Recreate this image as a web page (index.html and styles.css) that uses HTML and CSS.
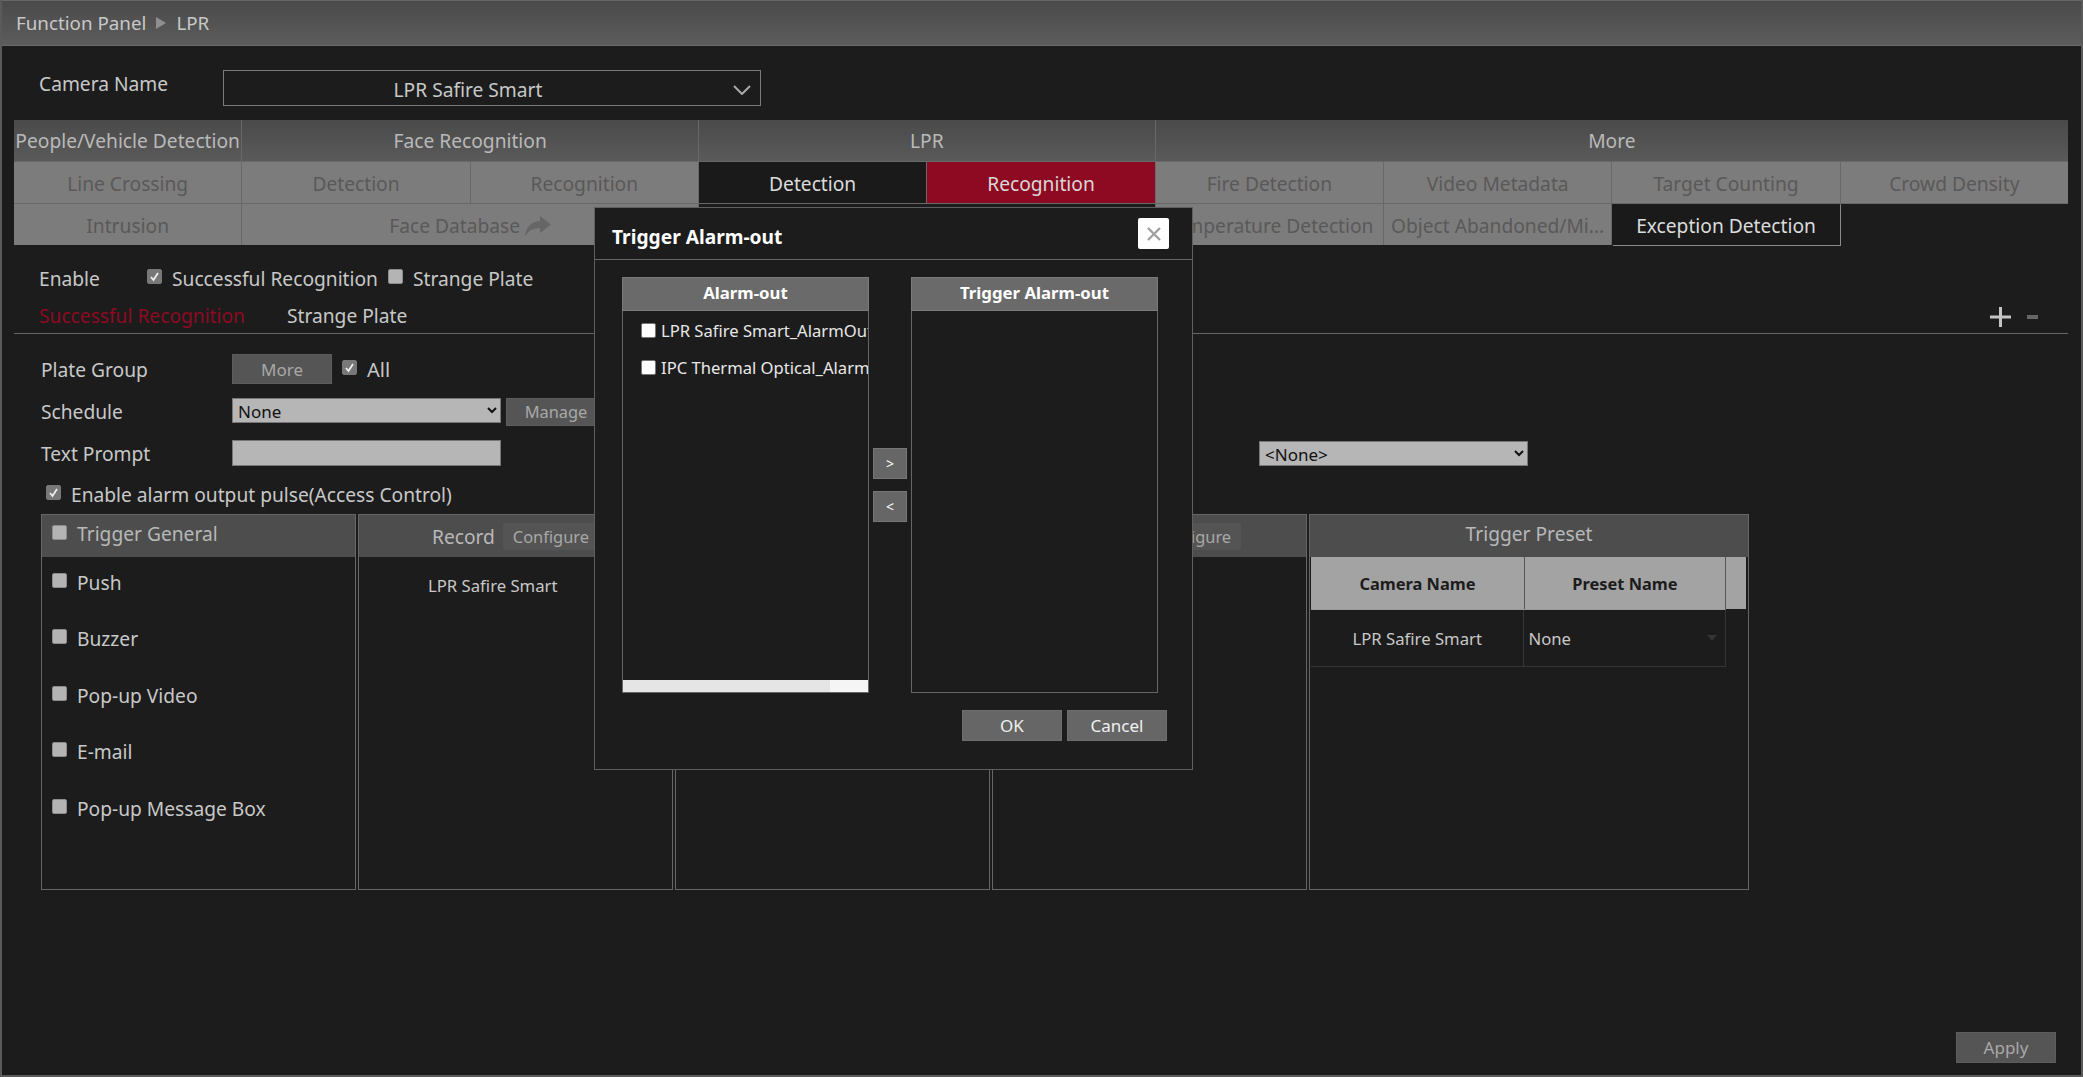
FILE: index.html
```html
<!DOCTYPE html>
<html lang="en">
<head>
    <meta charset="UTF-8">
    <title>LPR</title>
    <link rel="stylesheet" href="styles.css">
</head>
<body>
    <div class="page">
        <div class="crumb">
            <span>Function Panel</span>
            <svg class="crumb-arrow" width="10" height="12" viewBox="0 0 10 12"><path d="M0 0L10 6L0 12Z" fill="#8f8f8f"/></svg>
            <span>LPR</span>
        </div>

        <div class="camera-row">
            <span class="camera-label">Camera Name</span>
            <div class="camera-select">
                <span>LPR Safire Smart</span>
                <svg width="18" height="10" viewBox="0 0 18 10"><path d="M1 1L9 9L17 1" fill="none" stroke="#aaa" stroke-width="2"/></svg>
            </div>
        </div>

        <div class="tabs">
            <div class="tab top">People/Vehicle Detection</div>
            <div class="tab top span2">Face Recognition</div>
            <div class="tab top span2">LPR</div>
            <div class="tab top span4">More</div>

            <div class="tab off">Line Crossing</div>
            <div class="tab off">Detection</div>
            <div class="tab off">Recognition</div>
            <div class="tab active">Detection</div>
            <div class="tab red">Recognition</div>
            <div class="tab off">Fire Detection</div>
            <div class="tab off">Video Metadata</div>
            <div class="tab off">Target Counting</div>
            <div class="tab off">Crowd Density</div>

            <div class="tab off">Intrusion</div>
            <div class="tab off span2">Face Database
                <svg class="share" width="26" height="20" viewBox="0 0 26 20"><path d="M15 0L26 8.500L15 17V12C9 12 4 14 0 20C1 12 6 5.500 15 5Z" fill="#666"/></svg>
            </div>
            <div class="tab blank span2"></div>
            <div class="tab off">Temperature Detection</div>
            <div class="tab off">Object Abandoned/Mi...</div>
            <div class="tab active outlined">Exception Detection</div>
            <div class="tab blank"></div>
        </div>

        <div class="enable-row">
            <span class="enable-label">Enable</span>
            <span class="check on"><svg width="11" height="11" viewBox="0 0 11 11"><path d="M2 6L4.500 9L9 2" fill="none" stroke="#eee" stroke-width="1.800"/></svg></span>
            <span class="enable-text">Successful Recognition</span>
            <span class="check"></span>
            <span class="enable-text">Strange Plate</span>
        </div>

        <div class="subtabs">
            <span class="subtab current">Successful Recognition</span>
            <span class="subtab">Strange Plate</span>
            <svg class="plus" width="21" height="20" viewBox="0 0 21 20"><path d="M0 10H21M10.500 0V20" stroke="#c4c4c4" stroke-width="3"/></svg>
            <span class="minus"></span>
        </div>

        <div class="form-row plate-row">
            <span class="form-label">Plate Group</span>
            <button class="btn more-btn">More</button>
            <span class="check on"><svg width="11" height="11" viewBox="0 0 11 11"><path d="M2 6L4.500 9L9 2" fill="none" stroke="#eee" stroke-width="1.800"/></svg></span>
            <span class="all-label">All</span>
        </div>
        <div class="form-row schedule-row">
            <span class="form-label">Schedule</span>
            <select class="grey-select"><option>None</option></select>
            <button class="btn manage-btn">Manage</button>
        </div>
        <div class="form-row prompt-row">
            <span class="form-label">Text Prompt</span>
            <input class="grey-input" type="text">
            <select class="grey-select none-select"><option>&lt;None&gt;</option></select>
        </div>
        <div class="form-row pulse-row">
            <span class="check on"><svg width="11" height="11" viewBox="0 0 11 11"><path d="M2 6L4.500 9L9 2" fill="none" stroke="#eee" stroke-width="1.800"/></svg></span>
            <span>Enable alarm output pulse(Access Control)</span>
        </div>

        <div class="panels">
            <div class="panel">
                <div class="panel-head left-head"><span class="check"></span>Trigger General</div>
                <div class="trigger-item"><span class="check"></span>Push</div>
                <div class="trigger-item"><span class="check"></span>Buzzer</div>
                <div class="trigger-item"><span class="check"></span>Pop-up Video</div>
                <div class="trigger-item"><span class="check"></span>E-mail</div>
                <div class="trigger-item"><span class="check"></span>Pop-up Message Box</div>
            </div>
            <div class="panel">
                <div class="panel-head record-head">Record <button class="btn conf-btn">Configure</button></div>
                <div class="record-cam">LPR Safire Smart</div>
            </div>
            <div class="panel">
                <div class="panel-head"></div>
            </div>
            <div class="panel">
                <div class="panel-head conf-head"><button class="btn conf-btn">Configure</button></div>
            </div>
            <div class="panel preset-panel">
                <div class="panel-head preset-head">Trigger Preset</div>
                <div class="preset-thead">
                    <div class="preset-cam">Camera Name</div>
                    <div class="preset-name">Preset Name</div>
                </div>
                <div class="preset-row">
                    <div class="preset-cam">LPR Safire Smart</div>
                    <div class="preset-name">
                        <span>None</span>
                        <svg width="10" height="6" viewBox="0 0 10 6"><path d="M0 0H10L5 6Z" fill="#333"/></svg>
                    </div>
                </div>
            </div>
        </div>

        <div class="apply-row">
            <button class="btn apply-btn">Apply</button>
        </div>

        <!-- janela do alarm-out -->
        <div class="modal">
            <div class="modal-title">
                <span class="modal-name">Trigger Alarm-out</span>
                <button class="modal-close">
                    <svg width="14" height="14" viewBox="0 0 14 14"><path d="M1 1L13 13M13 1L1 13" stroke="#a0a0a0" stroke-width="2.400"/></svg>
                </button>
            </div>
            <div class="modal-body">
                <div class="list">
                    <div class="list-head">Alarm-out</div>
                    <div class="list-body">
                        <div class="list-item"><span class="check white"></span>LPR Safire Smart_AlarmOut1</div>
                        <div class="list-item"><span class="check white"></span>IPC Thermal Optical_AlarmOut1</div>
                    </div>
                    <div class="list-scroll"><div class="list-thumb"></div></div>
                </div>
                <div class="move-btns">
                    <button class="move-btn">&gt;</button>
                    <button class="move-btn">&lt;</button>
                </div>
                <div class="list">
                    <div class="list-head">Trigger Alarm-out</div>
                    <div class="list-body"></div>
                </div>
            </div>
            <div class="modal-foot">
                <button class="foot-btn">OK</button>
                <button class="foot-btn">Cancel</button>
            </div>
        </div>
    </div>
</body>
</html>
```

FILE: styles.css
```css
* {
    box-sizing: border-box;
}
body {
    margin: 0;
    font-family: "Noto Sans", "Open Sans", sans-serif;
    font-size: 19.200px;
    color: #c8c8c8;
    background-color: #1c1c1c;
}
button {
    font-family: inherit;
}
.page {
    position: relative;
    width: 2083px;
    height: 1077px;
    overflow: hidden;
    background-color: #1c1c1c;
    border-left: 2px solid #5a5a5a;
    border-right: 2px solid #5a5a5a;
    border-bottom: 2px solid #5a5a5a;
}

/* topo */
.crumb {
    height: 46px;
    padding-left: 14px;
    display: flex;
    align-items: center;
    gap: 10px;
    font-size: 18.800px;
    background: linear-gradient(#4a4a4a, #5c5c5c);
    border-top: 1px solid #666;
    border-bottom: 1px solid #6a6a6a;
}
.camera-row {
    height: 36px;
    margin-top: 24px;
    display: flex;
}
.camera-label {
    width: 184px;
    margin-left: 37px;
}
.camera-select {
    width: 538px;
    height: 36px;
    border: 1px solid #7a7a7a;
    position: relative;
    display: flex;
    align-items: center;
    justify-content: center;
    padding-right: 48px;
    padding-top: 2px;
}
.camera-select svg {
    position: absolute;
    right: 9px;
    top: 14px;
}

/* abas */
.tabs {
    margin: 14px 13px 0 12px;
    display: grid;
    grid-template-columns: repeat(9, 1fr);
    grid-auto-rows: 41px;
    gap: 1px;
    background-color: #686868;
}
.tab {
    display: flex;
    align-items: center;
    justify-content: center;
    white-space: nowrap;
    overflow: hidden;
}
.span2 {
    grid-column: span 2;
}
.span4 {
    grid-column: span 4;
}
.top {
    background: linear-gradient(#4a4a4a, #5a5a5a);
    color: #b9b9b9;
}
.off {
    background-color: #7d7c7c;
    color: #595959;
    padding-top: 2px;
}
.active {
    background-color: #1a1a1a;
    color: #dcdcdc;
    padding-top: 2px;
}
.red {
    background-color: #8e0a22;
    color: #d8d8d8;
    padding-top: 2px;
}
.blank {
    background-color: #1c1c1c;
}
.outlined {
    box-shadow: 1px 1px 0 #8a8a8a;
}
.share {
    margin-left: 5px;
}

/* checkboxes */
.check {
    width: 15px;
    height: 15px;
    flex: none;
    display: inline-flex;
    align-items: center;
    justify-content: center;
    background-color: #b4b4b4;
    border: 1px solid #8c8c8c;
    border-radius: 2px;
}
.check.on {
    background-color: #787878;
    border-color: #787878;
}
.check.white {
    background-color: #fff;
    border-color: #777;
}

.enable-row {
    height: 32px;
    margin-top: 17px;
    padding-left: 37px;
    display: flex;
    align-items: center;
}
.enable-row .check {
    margin-top: -3px;
}
.enable-label {
    width: 108px;
}
.enable-text {
    margin-left: 10px;
    margin-right: 10px;
}
.subtabs {
    height: 36px;
    margin: 4px 13px 0 12px;
    padding-left: 25px;
    display: flex;
    align-items: center;
    border-bottom: 1px solid #666;
    position: relative;
}
.subtab {
    margin-right: 42px;
}
.current {
    color: #8e0a22;
}
.plus {
    position: absolute;
    right: 57px;
    top: 9px;
}
.minus {
    position: absolute;
    right: 30px;
    top: 17px;
    width: 11px;
    height: 4px;
    background-color: #666;
}

/* formulario */
.form-row {
    display: flex;
    align-items: center;
    padding-left: 39px;
}
.form-label {
    width: 191px;
    flex: none;
}
.plate-row {
    height: 30px;
    margin-top: 20px;
}
.plate-row .check {
    margin-top: -4px;
}
.schedule-row {
    height: 28px;
    margin-top: 14px;
}
.schedule-row .form-label {
    margin-top: -2px;
}
.prompt-row {
    height: 26px;
    margin-top: 14px;
}
.pulse-row {
    height: 20px;
    margin-top: 18px;
    padding-left: 44px;
    gap: 10px;
}
.pulse-row .check {
    margin-top: -3px;
}
.btn {
    background-color: #555;
    color: #a8a8a8;
    border: 1px solid #5c5c5c;
    font-size: 17px;
    padding: 0;
}
.more-btn {
    width: 100px;
    height: 30px;
    margin-right: 10px;
}
.all-label {
    margin-left: 10px;
    font-size: 20px;
}
.manage-btn {
    width: 100px;
    height: 28px;
    margin-left: 5px;
    padding-bottom: 2px;
    font-size: 16.400px;
}
.grey-select {
    width: 269px;
    height: 25px;
    background-color: #b6b6b6;
    color: #111;
    border: 1px solid #777;
    font-family: inherit;
    font-size: 17px;
    padding: 0 0 0 1px;
}
.schedule-row .grey-select {
    align-self: flex-start;
}
.grey-input {
    width: 269px;
    height: 26px;
    background-color: #b6b6b6;
    border: 1px solid #777;
}
.none-select {
    margin-left: 758px;
}

/* paineis */
.panels {
    height: 376px;
    margin-top: 10px;
    margin-left: 39px;
    display: flex;
    gap: 2px;
}
.panel {
    width: 315px;
    border: 1px solid #666;
    border-top: none;
    flex: none;
}
.preset-panel {
    width: 440px;
}
.panel-head {
    height: 43px;
    background-color: #4d4d4d;
    color: #b8b8b8;
    border-top: 1px solid #666;
    display: flex;
    align-items: center;
    justify-content: center;
}
.left-head {
    justify-content: flex-start;
    padding: 0 0 6px 10px;
    gap: 10px;
}
.left-head .check {
    margin-top: -2px;
}
.preset-head {
    padding-bottom: 6px;
}
.record-head {
    justify-content: flex-start;
    padding-left: 73px;
}
.conf-head {
    justify-content: flex-end;
    padding-right: 64px;
}
.conf-btn {
    width: 98px;
    height: 29px;
    margin-left: 7px;
    background-color: #545454;
    border-color: #4d4d4d;
    font-size: 16.400px;
}
.trigger-item {
    height: 56.400px;
    padding: 12px 0 0 10px;
    display: flex;
    align-items: flex-start;
    gap: 10px;
}
.trigger-item .check {
    margin-top: 4px;
}
.record-cam {
    margin: 17px 0 0 69px;
    font-size: 16.700px;
}
.preset-thead {
    height: 52px;
    margin: 0 2px 0 1px;
    display: flex;
    background-color: #a3a3a3;
    color: #1c1c1c;
    font-size: 16.400px;
    font-weight: bold;
}
.preset-thead div {
    display: flex;
    align-items: center;
    justify-content: center;
    border-right: 1px solid #555;
}
.preset-cam {
    width: 214px;
}
.preset-name {
    width: 201px;
}
.preset-row {
    width: 415px;
    height: 58px;
    margin-left: 1px;
    display: flex;
    font-size: 16.700px;
    border-bottom: 1px solid #33353a;
    border-right: 1px solid #33353a;
    border-top: 1px solid #999;
}
.preset-row .preset-cam {
    display: flex;
    align-items: center;
    justify-content: center;
    border-right: 1px solid #33353a;
}
.preset-row .preset-name {
    display: flex;
    align-items: center;
    justify-content: space-between;
    padding: 0 8px 0 4px;
}
.apply-row {
    display: flex;
    justify-content: flex-end;
    margin-top: 142px;
    padding-right: 25px;
}
.apply-btn {
    width: 100px;
    height: 31px;
    font-size: 17px;
}

/* janela */
.modal {
    position: absolute;
    left: 592px;
    top: 207px;
    width: 599px;
    height: 563px;
    background-color: #1c1c1c;
    border: 1px solid #5f5f5f;
}
.modal-title {
    height: 52px;
    padding: 0 23px 0 17px;
    display: flex;
    align-items: center;
    justify-content: space-between;
    border-bottom: 1px solid #666;
    color: #fff;
    font-weight: bold;
}
.modal-name {
    margin-top: 5px;
}
.modal-close {
    width: 31px;
    height: 31px;
    padding: 0;
    background-color: #fff;
    border: none;
    border-radius: 2px;
    display: flex;
    align-items: center;
    justify-content: center;
}
.modal-body {
    margin: 17px 0 0 28px;
    height: 416px;
    display: flex;
}
.list {
    width: 247px;
    height: 416px;
    border: 1px solid #666;
    display: flex;
    flex-direction: column;
}
.list:first-child {
    margin-left: -1px;
}
.list-head {
    height: 34px;
    flex: none;
    margin: -1px -1px 0;
    padding-bottom: 4px;
    background-color: #6a6a6a;
    border: 1px solid #7a7a7a;
    color: #fff;
    font-size: 16.800px;
    font-weight: bold;
    display: flex;
    align-items: center;
    justify-content: center;
}
.list-body {
    flex: 1;
    overflow: hidden;
    padding-top: 1px;
}
.list-item {
    height: 37px;
    padding-left: 18px;
    display: flex;
    align-items: center;
    gap: 5px;
    white-space: nowrap;
    color: #e8e8e8;
    font-size: 16.600px;
}
.list-scroll {
    height: 12px;
    flex: none;
    background-color: #f5f5f5;
}
.list-thumb {
    width: 207px;
    height: 12px;
    background-color: #e5e5e5;
}
.move-btns {
    width: 42px;
    padding: 171px 0 0 4px;
    display: flex;
    flex-direction: column;
    gap: 12px;
}
.move-btn {
    width: 34px;
    height: 31px;
    padding: 0;
    background-color: #666;
    border: 1px solid #777;
    color: #fff;
    font-size: 14px;
}
.modal-foot {
    margin: 17px 25px 0 0;
    display: flex;
    justify-content: flex-end;
    gap: 5px;
}
.foot-btn {
    width: 100px;
    height: 31px;
    padding: 0;
    background-color: #666;
    border: 1px solid #6e6e6e;
    color: #f0f0f0;
    font-size: 17px;
}
```
